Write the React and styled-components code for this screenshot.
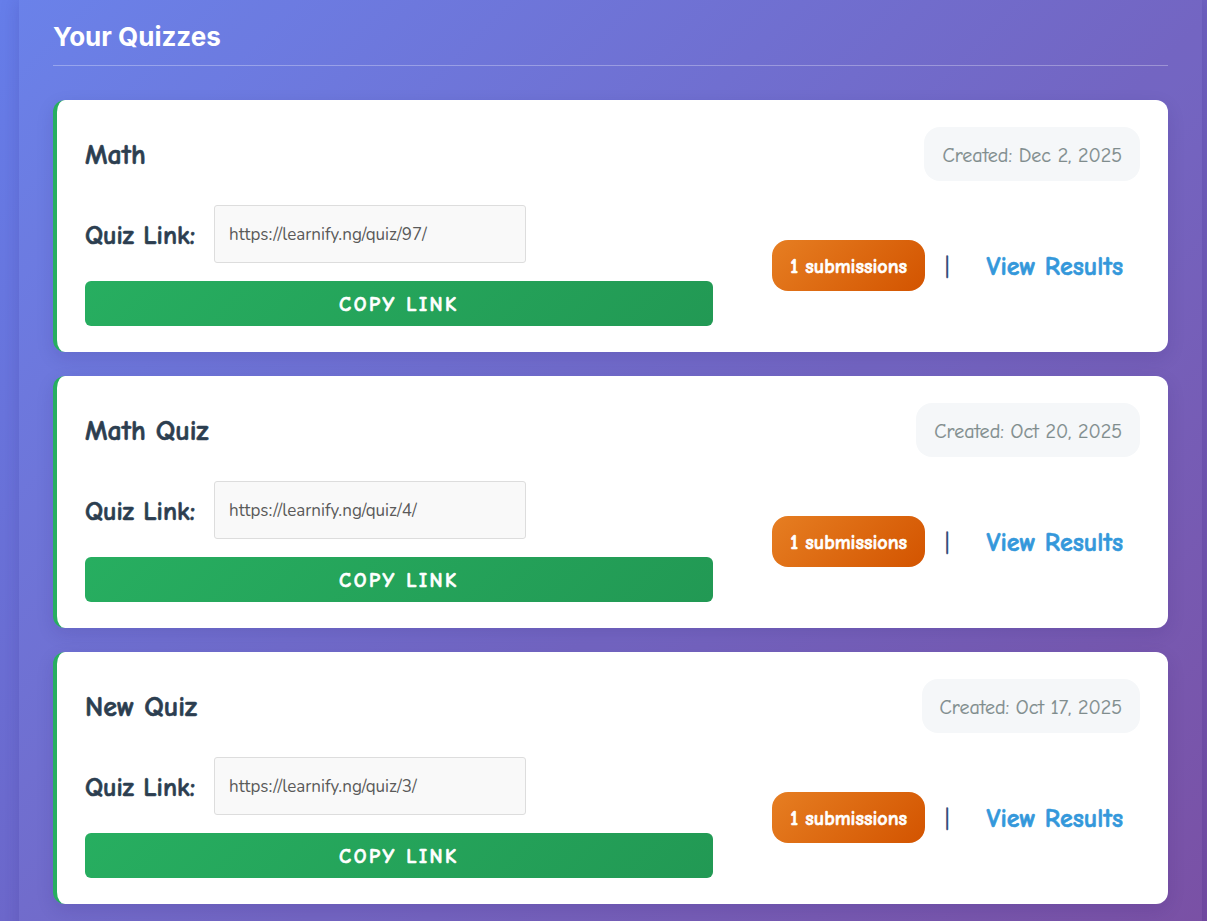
import React from 'react';
import styled, { createGlobalStyle } from 'styled-components';

const GlobalStyle = createGlobalStyle`
  html, body {
    margin: 0;
    padding: 0;
  }
  body {
    min-height: 100vh;
    background: linear-gradient(135deg, #667eea 0%, #764ba2 100%);
    font-family: "Comic Sans MS", "Comic Neue", "Noto Sans", sans-serif;
    overflow: hidden;
  }
`;

const Panel = styled.div`
  margin-left: 19px;
  width: 1183px;
  min-height: 921px;
  box-sizing: border-box;
  padding: 20px 34px 40px;
  background: rgba(255, 255, 255, 0.03);
  box-shadow: 0 0 18px rgba(40, 30, 120, 0.18);
`;

const Heading = styled.h2`
  margin: 0;
  padding-bottom: 11px;
  border-bottom: 1px solid rgba(255, 255, 255, 0.3);
  color: #fff;
  font-family: Inter, "Noto Sans", sans-serif;
  font-size: 26px;
  font-weight: 700;
  line-height: 34px;
`;

const List = styled.div`
  display: flex;
  flex-direction: column;
  gap: 24px;
  margin-top: 34px;
`;

const Card = styled.div`
  background: #fff;
  border-left: 4px solid #27ae60;
  border-radius: 12px;
  padding: 27px 28px 26px;
  box-shadow: 0 6px 18px rgba(30, 20, 90, 0.12);
  display: flex;
  flex-direction: column;
  gap: 24px;
`;

const CardHead = styled.div`
  display: flex;
  align-items: center;
  justify-content: space-between;
  height: 54px;
`;

const Title = styled.h3`
  margin: 0;
  padding-top: 2px;
  color: #2c3e50;
  font-size: 28px;
  font-weight: 700;
  -webkit-text-stroke: 0.6px #2c3e50;
`;

const DatePill = styled.span`
  display: inline-flex;
  align-items: center;
  height: 54px;
  padding: 2px 18px 0;
  box-sizing: border-box;
  border-radius: 16px;
  background: #f5f7f9;
  color: #7f8c8d;
  font-size: 20px;
  -webkit-text-stroke: 0.2px #7f8c8d;
`;

const CardBody = styled.div`
  display: flex;
  align-items: center;
  justify-content: space-between;
`;

const LinkCol = styled.div`
  width: 628px;
  display: flex;
  flex-direction: column;
  gap: 18px;
`;

const LinkRow = styled.div`
  display: flex;
  align-items: center;
  gap: 19px;
`;

const Label = styled.label`
  padding-top: 4px;
  color: #2c3e50;
  font-size: 26px;
  font-weight: 700;
  -webkit-text-stroke: 0.6px #2c3e50;
`;

const LinkInput = styled.input`
  width: 312px;
  height: 58px;
  box-sizing: border-box;
  padding: 0 14px;
  border: 1px solid #ddd;
  border-radius: 3px;
  background: #f9f9f9;
  color: #5a5a5a;
  font-family: Nunito, Lato, "Open Sans", sans-serif;
  font-size: 17px;
  outline: none;
`;

const CopyButton = styled.button`
  height: 45px;
  padding-top: 3px;
  border: none;
  border-radius: 6px;
  background: linear-gradient(135deg, #27ae60 0%, #229954 100%);
  color: #fff;
  font-family: inherit;
  font-size: 20px;
  font-weight: 700;
  letter-spacing: 2.5px;
  text-transform: uppercase;
  -webkit-text-stroke: 0.6px #fff;
  cursor: pointer;
`;

const Actions = styled.div`
  display: flex;
  align-items: center;
  gap: 20px;
`;

const Badge = styled.span`
  display: inline-flex;
  align-items: center;
  height: 51px;
  padding: 2px 18px 0;
  box-sizing: border-box;
  border-radius: 16px;
  background: linear-gradient(135deg, #e67e22 0%, #d35400 100%);
  color: #fff;
  font-size: 20px;
  font-weight: 700;
  -webkit-text-stroke: 0.6px #fff;
`;

const Divider = styled.span`
  padding-top: 2px;
  color: #2c3e6f;
  font-size: 22px;
  -webkit-text-stroke: 0.4px #2c3e6f;
`;

const ResultsLink = styled.a`
  padding: 11px 17px 9px;
  color: #3498db;
  font-size: 26px;
  font-weight: 700;
  -webkit-text-stroke: 0.6px #3498db;
  text-decoration: none;
`;

const quizzes = [
  { id: 97, name: 'Math', created: 'Dec 2, 2025', submissions: 1 },
  { id: 4, name: 'Math Quiz', created: 'Oct 20, 2025', submissions: 1 },
  { id: 3, name: 'New Quiz', created: 'Oct 17, 2025', submissions: 1 },
];

function QuizCard({ quiz }) {
  const url = `https://learnify.ng/quiz/${quiz.id}/`;
  return (
    <Card>
      <CardHead>
        <Title>{quiz.name}</Title>
        <DatePill>Created: {quiz.created}</DatePill>
      </CardHead>
      <CardBody>
        <LinkCol>
          <LinkRow>
            <Label>Quiz Link:</Label>
            <LinkInput readOnly value={url} />
          </LinkRow>
          <CopyButton>Copy Link</CopyButton>
        </LinkCol>
        <Actions>
          <Badge>{quiz.submissions} submissions</Badge>
          <Divider>|</Divider>
          <ResultsLink href="#">View Results</ResultsLink>
        </Actions>
      </CardBody>
    </Card>
  );
}

export default function App() {
  return (
    <>
      <GlobalStyle />
      <Panel>
        <Heading>Your Quizzes</Heading>
        <List>
          {quizzes.map((q) => (
            <QuizCard key={q.id} quiz={q} />
          ))}
        </List>
      </Panel>
    </>
  );
}
